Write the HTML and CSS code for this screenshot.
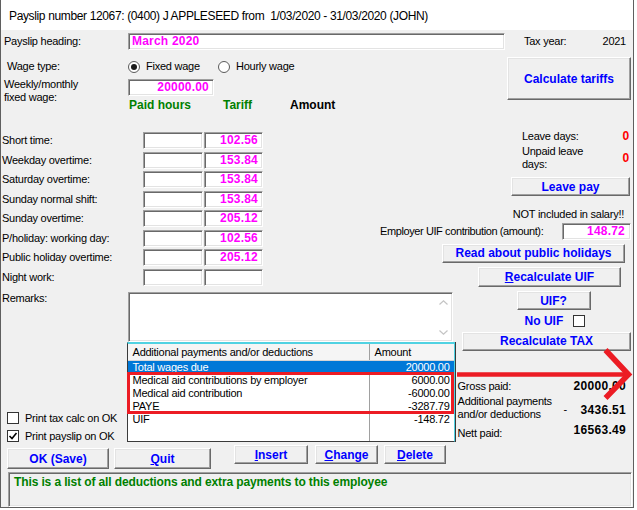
FILE: index.html
```html
<!DOCTYPE html>
<html lang="en">
<head>
    <meta charset="UTF-8">
    <title>Payslip</title>
    <link rel="stylesheet" href="styles.css">
</head>
<body>
<div class="window">
    <div class="titlebar">Payslip number 12067: (0400) J APPLESEED from&nbsp; 1/03/2020 - 31/03/2020 (JOHN)</div>
    <div class="client">

        <!-- heading and tax year -->
        <div class="head-row">
            <span class="head-label">Payslip heading:</span>
            <div class="field heading-field"><span class="pink">March 2020</span></div>
            <span class="tax-label">Tax year:</span>
            <span class="tax-value">2021</span>
        </div>

        <!-- wage type and fixed wage -->
        <div class="wage-section">
            <div class="wage-grid">
                <span class="wage-type-label">Wage type:</span>
                <div class="radio-group">
                    <label class="radio-opt fixed"><span class="radio checked"></span>Fixed wage</label>
                    <label class="radio-opt"><span class="radio"></span>Hourly wage</label>
                </div>
                <span class="fixed-label">Weekly/monthly<br>fixed wage:</span>
                <div class="field fixed-field pink">20000.00</div>
                <div class="col-heads">
                    <span class="green paid-head">Paid hours</span>
                    <span class="green tariff-head">Tariff</span>
                    <span class="amount-head">Amount</span>
                </div>
            </div>
            <button class="btn calc-btn">Calculate tariffs</button>
        </div>

        <!-- overtime rates and leave -->
        <div class="rates-section">
            <div class="rates">
                <div class="rate-row"><span class="rate-label">Short time:</span><div class="field hours"></div><div class="field tariff pink">102.56</div></div>
                <div class="rate-row"><span class="rate-label">Weekday overtime:</span><div class="field hours"></div><div class="field tariff pink">153.84</div></div>
                <div class="rate-row"><span class="rate-label">Saturday overtime:</span><div class="field hours"></div><div class="field tariff pink">153.84</div></div>
                <div class="rate-row"><span class="rate-label">Sunday normal shift:</span><div class="field hours"></div><div class="field tariff pink">153.84</div></div>
                <div class="rate-row"><span class="rate-label">Sunday overtime:</span><div class="field hours"></div><div class="field tariff pink">205.12</div></div>
                <div class="rate-row"><span class="rate-label">P/holiday: working day:</span><div class="field hours"></div><div class="field tariff pink">102.56</div></div>
                <div class="rate-row"><span class="rate-label">Public holiday overtime:</span><div class="field hours"></div><div class="field tariff pink">205.12</div></div>
                <div class="rate-row"><span class="rate-label">Night work:</span><div class="field hours"></div><div class="field tariff"></div></div>
            </div>
            <div class="side">
                <div class="leave">
                    <span>Leave days:</span><span class="red">0</span>
                    <span>Unpaid leave<br>days:</span><span class="red">0</span>
                </div>
                <button class="btn leave-btn">Leave pay</button>
                <span class="note">NOT included in salary!!</span>
                <div class="uif-row">
                    <span class="uif-label">Employer UIF contribution (amount):</span>
                    <div class="field uif-field pink">148.72</div>
                </div>
                <button class="btn holidays-btn">Read about public holidays</button>
                <button class="btn recalc-uif-btn"><u>R</u>ecalculate UIF</button>
            </div>
        </div>

        <!-- remarks, deductions list and totals -->
        <div class="lower-section">
            <div class="lower-left">
                <span class="remarks-label">Remarks:</span>
                <div class="checks">
                    <label class="check-row"><span class="checkbox"></span>Print tax calc on OK</label>
                    <label class="check-row">
                        <span class="checkbox"><svg width="10" height="10" viewBox="0 0 10 10"><polyline points="1.5,5 4,7.5 8.5,2" fill="none" stroke="#000" stroke-width="1.6"/></svg></span>
                        Print payslip on OK
                    </label>
                </div>
            </div>
            <div class="lower-mid">
                <div class="field remarks-box">
                    <div class="scrollbar">
                        <svg width="9" height="5" viewBox="0 0 9 5"><polyline points="0.5,4.5 4.5,0.8 8.5,4.5" fill="none" stroke="#c4c4c4" stroke-width="1.2"/></svg>
                        <svg width="9" height="5" viewBox="0 0 9 5"><polyline points="0.5,0.5 4.5,4.2 8.5,0.5" fill="none" stroke="#c4c4c4" stroke-width="1.2"/></svg>
                    </div>
                </div>
                <div class="list">
                    <div class="list-head"><span class="col-desc">Additional payments and/or deductions</span><span class="col-amt">Amount</span></div>
                    <div class="list-body">
                        <div class="list-row selected"><span>Total wages due</span><span class="amt">20000.00</span></div>
                        <div class="list-row"><span>Medical aid contributions by employer</span><span class="amt">6000.00</span></div>
                        <div class="list-row"><span>Medical aid contribution</span><span class="amt">-6000.00</span></div>
                        <div class="list-row"><span>PAYE</span><span class="amt">-3287.79</span></div>
                        <div class="list-row"><span>UIF</span><span class="amt">-148.72</span></div>
                    </div>
                </div>
            </div>
            <div class="lower-right">
                <button class="btn uifq-btn">UIF?</button>
                <div class="no-uif"><span>No UIF</span><span class="checkbox"></span></div>
                <button class="btn recalc-tax-btn">Recalculate TAX</button>
                <div class="totals">
                    <span class="t-label">Gross paid:</span><span></span><span class="t-value">20000.00</span>
                    <span class="t-label">Additional payments<br>and/or deductions</span><span class="t-dash">-</span><span class="t-value t-mid">3436.51</span>
                    <span class="t-label t-nett">Nett paid:</span><span></span><span class="t-value t-top">16563.49</span>
                </div>
            </div>
        </div>

        <div class="button-row">
            <button class="btn ok-btn">OK (Save)</button>
            <button class="btn quit-btn"><u>Q</u>uit</button>
            <button class="btn insert-btn"><u>I</u>nsert</button>
            <button class="btn change-btn"><u>C</u>hange</button>
            <button class="btn delete-btn"><u>D</u>elete</button>
        </div>

        <div class="field status">This is a list of all deductions and extra payments to this employee</div>

        <!-- red markings drawn over the list -->
        <div class="mark-box"></div>
        <svg class="mark-arrow" width="180" height="60" viewBox="0 0 180 60">
            <line x1="2" y1="30.5" x2="172" y2="30.5" stroke="#ec1c24" stroke-width="4.5"/>
            <polyline points="150.5,6 173.5,30.5 150.5,54" fill="none" stroke="#ec1c24" stroke-width="5.5"/>
        </svg>
    </div>
</div>
</body>
</html>
```

FILE: styles.css
```css
* {
    box-sizing: border-box;
}

body {
    margin: 0;
    background: #fff;
    font-family: "Liberation Sans", Arial, sans-serif;
    font-size: 11px;
    line-height: 13px;
    letter-spacing: -0.25px;
    color: #000;
}

.window {
    width: 634px;
    border: 1px solid #5f5f5f;
    border-top: none;
    background: #f0f0f0;
}

.titlebar {
    height: 30px;
    padding-left: 8px;
    background: #fff;
    font-size: 12px;
    line-height: 32px;
    letter-spacing: -0.36px;
    white-space: nowrap;
}

.client {
    position: relative;
    height: 477px;
}

/* common controls */
.field {
    background: #fff;
    border: 1px solid;
    border-color: #a0a0a0 #fff #fff #a0a0a0;
    box-shadow: inset 1px 1px #696969, inset -1px -1px #e3e3e3;
}

.btn {
    padding: 0;
    background: #f0f0f0;
    border: 1px solid;
    border-color: #fff #696969 #696969 #fff;
    box-shadow: inset -1px -1px #a0a0a0, inset 1px 1px #e3e3e3;
    color: #0000ff;
    font-family: "Liberation Sans", Arial, sans-serif;
    font-size: 12px;
    font-weight: bold;
    letter-spacing: 0;
}

.pink {
    color: #ff00ff;
    font-size: 12px;
    font-weight: bold;
    letter-spacing: 0.2px;
}

.green {
    color: #008000;
    font-size: 12px;
    font-weight: bold;
    letter-spacing: 0;
}

.red {
    color: #ff0000;
    font-size: 12px;
    font-weight: bold;
}

.radio {
    width: 12px;
    height: 12px;
    border: 1px solid #5a5a5a;
    border-radius: 50%;
    background: #fff;
    display: flex;
    align-items: center;
    justify-content: center;
}

.radio.checked::after {
    content: "";
    width: 6px;
    height: 6px;
    border-radius: 50%;
    background: #1a1a1a;
}

.checkbox {
    width: 12px;
    height: 12px;
    border: 1px solid #333;
    background: #fff;
    display: flex;
    align-items: center;
    justify-content: center;
}

/* heading row */
.head-row {
    height: 22px;
    display: flex;
    align-items: center;
}

.head-label {
    width: 127px;
    padding-left: 3px;
}

.heading-field {
    width: 377px;
    height: 17px;
    padding-left: 3px;
    line-height: 15px;
}

.tax-label {
    margin-left: 19px;
}

.tax-value {
    margin-left: auto;
    margin-right: 7px;
}

/* wage type */
.wage-section {
    height: 77px;
    display: flex;
    align-items: flex-start;
}

.wage-grid {
    width: 506px;
    padding-top: 6px;
    display: grid;
    grid-template-columns: 127px 1fr;
    grid-template-rows: 17px 18px 13px;
    row-gap: 3px;
}

.wage-type-label {
    padding-left: 6px;
    align-self: center;
}

.radio-group {
    display: flex;
    align-items: center;
}

.radio-opt {
    display: flex;
    align-items: center;
    gap: 6px;
}

.radio-opt.fixed {
    width: 90px;
}

.fixed-label {
    grid-row: 2 / span 2;
    padding-left: 3px;
}

.fixed-field {
    grid-column: 2;
    grid-row: 2;
    width: 86px;
    height: 17px;
    margin-top: 1px;
    padding-right: 4px;
    text-align: right;
    line-height: 15px;
}

.col-heads {
    grid-column: 2;
    grid-row: 3;
    display: flex;
}

.paid-head {
    width: 94px;
    margin-left: 1px;
}

.tariff-head {
    width: 67px;
}

.amount-head {
    font-size: 12px;
    font-weight: bold;
    letter-spacing: 0;
}

.calc-btn {
    width: 124px;
    height: 43px;
    margin-top: 5px;
}

/* overtime rates */
.rates-section {
    height: 161px;
    display: flex;
}

.rates {
    width: 262px;
    padding-top: 3px;
    display: flex;
    flex-direction: column;
    gap: 2.5px;
}

.rate-row {
    height: 17px;
    display: flex;
    align-items: center;
}

.rate-label {
    width: 142px;
    padding-left: 1px;
}

.rate-row .field {
    height: 17px;
    padding-right: 4px;
    text-align: right;
    line-height: 15px;
}

.hours {
    width: 60px;
}

.tariff {
    width: 59px;
    margin-left: 1px;
}

.side {
    flex: 1;
    display: flex;
    flex-direction: column;
    align-items: flex-end;
}

.leave {
    width: 107px;
    margin-top: 0.5px;
    margin-right: 4px;
    display: grid;
    grid-template-columns: 1fr auto;
    row-gap: 2.5px;
    align-items: center;
}

.leave-btn {
    width: 119px;
    height: 19px;
    margin-top: 6px;
    margin-right: 3px;
}

.note {
    margin-top: 11.5px;
    margin-right: 9px;
}

.uif-row {
    margin-top: 2px;
    margin-right: 2px;
    display: flex;
    align-items: center;
}

.uif-label {
    width: 182px;
    letter-spacing: -0.4px;
}

.uif-field {
    width: 69px;
    height: 17px;
    padding-right: 5px;
    text-align: right;
    line-height: 15px;
}

.holidays-btn {
    width: 183px;
    height: 19px;
    margin-top: 4px;
    margin-right: 8px;
}

.recalc-uif-btn {
    width: 143px;
    height: 20px;
    margin-top: 4px;
    margin-right: 12px;
}

/* remarks, list, totals */
.lower-section {
    height: 152px;
    display: flex;
}

.lower-left {
    width: 126px;
    display: flex;
    flex-direction: column;
}

.remarks-label {
    margin-top: 1.5px;
    padding-left: 1px;
}

.checks {
    margin-top: auto;
    margin-bottom: -3px;
}

.check-row {
    height: 18px;
    padding-left: 6px;
    display: flex;
    align-items: center;
    gap: 6px;
}

.lower-mid {
    width: 329px;
    display: flex;
    flex-direction: column;
}

.remarks-box {
    width: 325px;
    height: 50px;
    margin-top: 1.5px;
    margin-left: 1px;
    display: flex;
    justify-content: flex-end;
}

.scrollbar {
    width: 17px;
    padding: 7px 0 6px;
    display: flex;
    flex-direction: column;
    justify-content: space-between;
    align-items: center;
}

.scrollbar svg {
    display: block;
}

.list {
    flex: 1;
    width: 328px;
    background: #fff;
    border-top: 2px solid #50d2e2;
    border-right: 1px solid #50d2e2;
    border-left: 1px solid #3a3a3a;
    border-bottom: 1px solid #3a3a3a;
    box-shadow: 1px 0 #3a3a3a;
    display: flex;
    flex-direction: column;
}

.list-head {
    height: 17px;
    display: flex;
    background: #f5f5f5;
    border-bottom: 1px solid #d5d5d5;
}

.list-head span {
    line-height: 16px;
}

.col-desc {
    width: 242px;
    padding-left: 5px;
    border-right: 1px solid #a0a0a0;
}

.col-amt {
    padding-left: 5px;
}

.list-body {
    flex: 1;
    background: linear-gradient(to right, transparent 241px, #a0a0a0 241px, #a0a0a0 242px, transparent 242px);
}

.list-row {
    height: 13px;
    display: flex;
    justify-content: space-between;
    padding: 0 4px 0 5px;
}

.list-row.selected {
    background: #0078d7;
    color: #fff;
}

.lower-right {
    flex: 1;
    display: flex;
    flex-direction: column;
    align-items: flex-start;
}

.uifq-btn {
    width: 74px;
    height: 19px;
    margin-top: 1px;
    margin-left: 62px;
}

.no-uif {
    height: 12px;
    margin-top: 5px;
    margin-left: 70px;
    display: flex;
    align-items: center;
    gap: 10px;
    color: #0000ff;
    font-size: 12px;
    font-weight: bold;
    letter-spacing: 0;
}

.recalc-tax-btn {
    width: 169px;
    height: 19px;
    margin-top: 4.5px;
    margin-left: 7.5px;
}

.totals {
    align-self: stretch;
    margin-top: 28.5px;
    padding: 0 7px 0 3px;
    display: grid;
    grid-template-columns: 106px 10px 1fr;
    row-gap: 2px;
    align-items: center;
}

.t-value {
    font-size: 12px;
    font-weight: bold;
    line-height: 14px;
    letter-spacing: 0.3px;
    text-align: right;
}

.t-dash {
    padding-top: 3px;
}

.t-mid {
    padding-top: 3px;
}

.t-nett {
    align-self: end;
    padding-top: 4px;
}

.t-top {
    align-self: start;
}

/* bottom buttons and status line */
.button-row {
    height: 30px;
    display: flex;
    align-items: flex-start;
}

.ok-btn,
.quit-btn {
    height: 21px;
    margin-top: 6px;
}

.ok-btn {
    width: 102px;
    margin-left: 6px;
}

.quit-btn {
    width: 97px;
    margin-left: 5px;
}

.insert-btn,
.change-btn,
.delete-btn {
    height: 19px;
    margin-top: 3px;
}

.insert-btn {
    width: 74px;
    margin-left: 23px;
}

.change-btn {
    width: 63px;
    margin-left: 7px;
}

.delete-btn {
    width: 62px;
    margin-left: 6px;
}

.status {
    width: 624px;
    height: 35px;
    margin-left: 7px;
    padding: 2.5px 5px;
    background: #f0f0f0;
    color: #008000;
    font-size: 12px;
    font-weight: bold;
    letter-spacing: -0.12px;
}

/* red markings */
.mark-box {
    position: absolute;
    left: 126px;
    top: 341.7px;
    width: 327px;
    height: 42.6px;
    border: 3px solid #ec1c24;
}

.mark-arrow {
    position: absolute;
    left: 454px;
    top: 314px;
}
```
